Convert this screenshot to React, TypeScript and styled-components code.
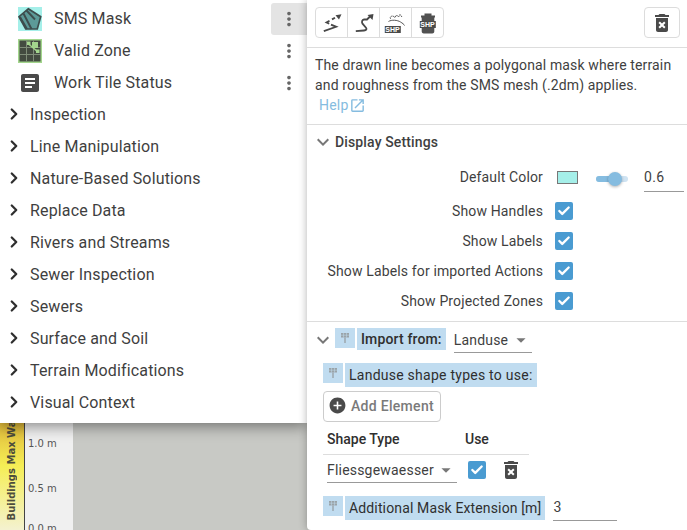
import React from "react"
import styled, { createGlobalStyle } from "styled-components"
import { Check, ChevronRight } from "lucide-react"
import {
  MdAddCircle,
  MdArrowDropDown,
  MdArticle,
  MdDeleteForever,
  MdExpandMore,
  MdMoreVert,
  MdOpenInNew,
} from "react-icons/md"

const GlobalStyle = createGlobalStyle`
  html, body {
    margin: 0;
    padding: 0;
    overflow: hidden;
    background: #c8c9c5;
  }
  body {
    font-family: Roboto, "Liberation Sans", sans-serif;
    color: #3f3f3f;
  }
`

const GROUPS = [
  "Inspection",
  "Line Manipulation",
  "Nature-Based Solutions",
  "Replace Data",
  "Rivers and Streams",
  "Sewer Inspection",
  "Sewers",
  "Surface and Soil",
  "Terrain Modifications",
  "Visual Context",
]

const TOGGLES = [
  "Show Handles",
  "Show Labels",
  "Show Labels for imported Actions",
  "Show Projected Zones",
]

const SmsMaskIcon = () => (
  <svg width="24" height="24" viewBox="0 0 24 24">
    <rect width="24" height="24" fill="#a5efe9" />
    <path d="M10.300 1.700 22.700 9.700 19.300 22H7.700L1 9.700z" fill="#5c9a98" stroke="#3d4d4d" strokeWidth="1.700" />
    <path d="M2 10 9 22M5.500 6.500 13.500 22M8.500 3.500 17 12.500" stroke="#3d4d4d" strokeWidth="1.900" fill="none" />
  </svg>
)

const ValidZoneIcon = () => (
  <svg width="24" height="24" viewBox="0 0 24 24">
    <rect width="24" height="24" fill="#a3d68d" />
    <rect x="1.500" y="1.500" width="21" height="21" fill="#434b40" />
    <path d="M8.500 1.500v21M15.500 1.500v21M1.500 8.500h21M1.500 15.500h21" stroke="#7f8d78" strokeWidth="1" />
    <path d="M10 4.500 20 13" stroke="#a3d68d" strokeWidth="1.600" />
    <rect x="14" y="3" width="6" height="6" fill="#a3d68d" />
    <rect x="9" y="2.500" width="3.500" height="3.500" fill="#a3d68d" />
    <rect x="18" y="10.500" width="3.500" height="3.500" fill="#a3d68d" />
  </svg>
)

const DashedArrowIcon = () => (
  <svg width="24" height="24" viewBox="0 0 24 24" fill="none" stroke="#484848" strokeWidth="1.800">
    <path d="M3.800 20.200 16.200 15.800 11 13.600M9.200 12.800 6.500 11.500 9.500 9.800M12 8.400 15 6.700" />
    <path d="M15.500 4.300 21.500 3.200 19 8.500z" fill="#484848" stroke="none" />
  </svg>
)

const LineArrowIcon = () => (
  <svg width="24" height="24" viewBox="0 0 24 24" fill="none" stroke="#484848" strokeWidth="1.800">
    <path d="M3.800 20.200 12 19.500c2.500-.2 3-1.500 2-2.800l-3.500-4c-1-1.500-.5-4 1.500-4.200h3l3-3" />
    <path d="M15.500 4 21.500 3 20.500 9z" fill="#484848" stroke="none" />
  </svg>
)

const ShpTag = styled.span<{ $top: number; $shift: number }>`
  position: absolute;
  left: 50%;
  top: ${(p) => p.$top}px;
  transform: translateX(calc(-50% + ${(p) => p.$shift}px));
  padding: 0 1px;
  background: #4a4a4a;
  color: #fff;
  font-family: "Liberation Sans", sans-serif;
  font-size: 7px;
  font-weight: 700;
  line-height: 7px;
  white-space: nowrap;
`

const ShapeIconBox = styled.span`
  position: relative;
  display: block;
  width: 24px;
  height: 24px;
`

const ShpImportIcon = () => (
  <ShapeIconBox>
    <svg width="24" height="24" viewBox="0 0 24 24" fill="none" stroke="#555" strokeWidth="1">
      <path d="M4.500 10.500c3-2 9-1.500 12 .5 2 1.200 3.500 2.300 4 3.500" />
      <path d="M7 8c-2-1.500 0-3 2-3l2 1.500L12.500 4l2 2 1.500-2.500 2 2.500" strokeDasharray="2 .6" />
    </svg>
    <ShpTag $top={15} $shift={-3}>SHP</ShpTag>
  </ShapeIconBox>
)

const ShpTrashIcon = () => (
  <ShapeIconBox>
    <svg width="24" height="24" viewBox="0 0 24 24" fill="#515151">
      <path d="M5 4.500h14v2H5zM8.500 2.500h7v2h-7zM5.700 6.500h12.600v14c0 1-1 2-2 2H7.700c-1 0-2-1-2-2z" />
    </svg>
    <ShpTag $top={10} $shift={0}>SHP</ShpTag>
  </ShapeIconBox>
)

const PinIcon = () => (
  <svg width="12" height="12" viewBox="0 0 12 12" fill="#9aa3a8">
    <path d="M2 1h8v4.500H2z" />
    <path d="M5.300 5.500h1.400V11H5.300z" />
    <path d="M4.500 1v4.500M7.500 1v4.500M2 3.200h8" stroke="#c0dcf0" strokeWidth=".5" />
  </svg>
)

const Checkbox = () => (
  <CheckBoxBox>
    <Check size={14} strokeWidth={4} />
  </CheckBoxBox>
)

const App: React.FC = () => {
  return (
    <Page>
      <GlobalStyle />
      <LeftColumn>
        <Menu>
          <LayerRow>
            <LayerIcon>
              <SmsMaskIcon />
            </LayerIcon>
            <LayerName>SMS Mask</LayerName>
            <MoreButton $active>
              <MdMoreVert size={22} />
            </MoreButton>
          </LayerRow>
          <LayerRow>
            <LayerIcon>
              <ValidZoneIcon />
            </LayerIcon>
            <LayerName>Valid Zone</LayerName>
            <MoreButton>
              <MdMoreVert size={22} />
            </MoreButton>
          </LayerRow>
          <LayerRow>
            <LayerIcon>
              <MdArticle size={24} color="#4a4a4a" />
            </LayerIcon>
            <LayerName>Work Tile Status</LayerName>
            <MoreButton>
              <MdMoreVert size={22} />
            </MoreButton>
          </LayerRow>
          {GROUPS.map((group) => (
            <GroupRow key={group}>
              <ChevronRight size={18} strokeWidth={3} color="#2f2f2f" />
              <GroupName>{group}</GroupName>
            </GroupRow>
          ))}
        </Menu>
        <MapArea>
          <Legend>
            <LegendStrip>
              <LegendTitle>Buildings Max Water</LegendTitle>
            </LegendStrip>
            <LegendTicks>
              <LegendTick>1.0 m</LegendTick>
              <LegendTick>0.5 m</LegendTick>
              <LegendTick>0.0 m</LegendTick>
            </LegendTicks>
          </Legend>
        </MapArea>
      </LeftColumn>

      <Panel>
        <Toolbar>
          <ButtonGroup>
            <ToolButton>
              <DashedArrowIcon />
            </ToolButton>
            <ToolButton>
              <LineArrowIcon />
            </ToolButton>
            <ToolButton>
              <ShpImportIcon />
            </ToolButton>
            <ToolButton>
              <ShpTrashIcon />
            </ToolButton>
          </ButtonGroup>
          <DeleteButton>
            <MdDeleteForever size={24} color="#4a4a4a" />
          </DeleteButton>
        </Toolbar>

        <Description>
          <DescriptionText>
            The drawn line becomes a polygonal mask where terrain and roughness from the SMS mesh
            (.2dm) applies.
          </DescriptionText>
          <HelpLink>
            Help
            <MdOpenInNew size={17} />
          </HelpLink>
        </Description>

        <Section>
          <SectionHeader>
            <MdExpandMore size={24} color="#777" />
            <SectionTitle>Display Settings</SectionTitle>
          </SectionHeader>
          <ColorRow>
            <RowLabel>Default Color</RowLabel>
            <ColorSwatch />
            <Slider>
              <SliderFill />
              <SliderThumb />
            </Slider>
            <OpacityValue>0.6</OpacityValue>
          </ColorRow>
          {TOGGLES.map((label) => (
            <ToggleRow key={label}>
              <RowLabel>{label}</RowLabel>
              <Checkbox />
            </ToggleRow>
          ))}
        </Section>

        <ImportSection>
          <ImportHeader>
            <MdExpandMore size={24} color="#777" />
            <PinBox>
              <PinIcon />
            </PinBox>
            <Highlight $bold>Import from:</Highlight>
            <SelectBox $width={78} $gap={8}>
              Landuse
              <MdArrowDropDown size={22} color="#777" />
            </SelectBox>
          </ImportHeader>
          <ImportBody>
            <PinnedRow>
              <PinBox>
                <PinIcon />
              </PinBox>
              <Highlight $wide>Landuse shape types to use:</Highlight>
            </PinnedRow>
            <AddButton>
              <MdAddCircle size={19} color="#4a4a4a" />
              Add Element
            </AddButton>
            <ShapeTable>
              <ShapeHeader>Shape Type</ShapeHeader>
              <ShapeHeader>Use</ShapeHeader>
              <ShapeHeader />
              <ShapeCell $pad={4}>
                <SelectBox $width={130} $gap={0}>
                  Fliessgewaesser
                  <MdArrowDropDown size={22} color="#777" />
                </SelectBox>
              </ShapeCell>
              <ShapeCell $pad={7}>
                <Checkbox />
              </ShapeCell>
              <ShapeCell $pad={2}>
                <MdDeleteForever size={24} color="#4a4a4a" />
              </ShapeCell>
            </ShapeTable>
            <MaskRow>
              <PinBox>
                <PinIcon />
              </PinBox>
              <Highlight>Additional Mask Extension [m]</Highlight>
              <NumberField>3</NumberField>
            </MaskRow>
          </ImportBody>
        </ImportSection>
      </Panel>
    </Page>
  )
}

const Page = styled.div`
  display: flex;
  width: 687px;
  height: 530px;
  overflow: hidden;
`

const LeftColumn = styled.div`
  display: flex;
  flex-direction: column;
  width: 307px;
  flex-shrink: 0;
`

const Menu = styled.div`
  position: relative;
  z-index: 1;
  height: 421px;
  padding-top: 2px;
  background: #fff;
  box-shadow: 0 3px 14px rgba(0, 0, 0, 0.45);
`

const LayerRow = styled.div`
  display: flex;
  align-items: center;
  height: 32px;
`

const LayerIcon = styled.span`
  display: flex;
  align-items: center;
  justify-content: center;
  width: 24px;
  height: 24px;
  margin: 2px 0 0 18px;
`

const LayerName = styled.span`
  flex: 1;
  margin-left: 12px;
  font-size: 16px;
  letter-spacing: 0.15px;
`

const MoreButton = styled.span<{ $active?: boolean }>`
  display: flex;
  align-items: center;
  justify-content: center;
  width: 36px;
  height: 32px;
  margin-top: 2px;
  border-radius: 3px 0 0 3px;
  color: #666;
  background: ${(p) => (p.$active ? "#e4e4e4" : "transparent")};
`

const GroupRow = styled.div`
  display: flex;
  align-items: center;
  height: 32px;
  padding-left: 5px;
`

const GroupName = styled.span`
  margin-left: 7px;
  font-size: 16px;
  letter-spacing: 0.15px;
`

const MapArea = styled.div`
  flex: 1;
  min-height: 0;
  overflow: hidden;
  background: #c8c9c5;
`

const Legend = styled.div`
  display: flex;
  width: 73px;
  height: 107px;
  background: #f0f0f0;
`

const LegendStrip = styled.div`
  display: flex;
  justify-content: center;
  align-items: flex-end;
  width: 24px;
  height: 100%;
  border-right: 1px solid #444;
  overflow: hidden;
  background: linear-gradient(to bottom, #e0b93a 0, #f5ee55 40%, #f4f2d0 100%);
`

const LegendTitle = styled.span`
  display: block;
  margin-bottom: 10px;
  writing-mode: vertical-rl;
  transform: rotate(180deg);
  font-family: "DejaVu Sans", sans-serif;
  font-size: 10px;
  font-weight: 700;
  line-height: 24px;
  white-space: nowrap;
  color: #4c4c3c;
`

const LegendTicks = styled.div`
  display: flex;
  flex-direction: column;
  gap: 30px;
  padding: 13px 0 0 3px;
`

const LegendTick = styled.span`
  font-family: "DejaVu Sans", sans-serif;
  font-size: 10px;
  line-height: 15px;
  color: #555;
  &:last-child {
    margin-top: -5px;
  }
`

const Panel = styled.div`
  position: relative;
  z-index: 2;
  flex: 1;
  background: #fff;
  border-bottom-left-radius: 4px;
  box-shadow: 0 0 8px rgba(0, 0, 0, 0.3);
`

const Toolbar = styled.div`
  display: flex;
  justify-content: space-between;
  height: 48px;
  padding: 7px 7px 0 8px;
  box-sizing: border-box;
  border-bottom: 1px solid #ddd;
`

const ButtonGroup = styled.div`
  display: flex;
  height: 31px;
  border: 1px solid #dcdcdc;
  border-radius: 4px;
  box-sizing: border-box;
`

const ToolButton = styled.span`
  display: flex;
  align-items: center;
  justify-content: center;
  width: 31px;
  & + & {
    border-left: 1px solid #dcdcdc;
  }
`

const DeleteButton = styled.span`
  display: flex;
  align-items: center;
  justify-content: center;
  width: 36px;
  height: 31px;
  border: 1px solid #dcdcdc;
  border-radius: 4px;
  box-sizing: border-box;
`

const Description = styled.div`
  height: 77px;
  padding: 7px 8px 0;
  box-sizing: border-box;
  border-bottom: 1px solid #ddd;
  font-size: 14px;
  line-height: 20px;
`

const DescriptionText = styled.div`
  letter-spacing: 0.14px;
`

const HelpLink = styled.span`
  display: inline-flex;
  align-items: center;
  gap: 1px;
  margin-left: 4px;
  letter-spacing: 0.2px;
  color: #85bce0;
`

const Section = styled.div`
  height: 197px;
  padding-top: 7px;
  box-sizing: border-box;
  border-bottom: 1px solid #ddd;
`

const SectionHeader = styled.div`
  display: flex;
  align-items: center;
  height: 20px;
  padding-left: 4px;
`

const SectionTitle = styled.span`
  font-size: 14px;
  font-weight: 500;
  letter-spacing: 0.14px;
`

const ColorRow = styled.div`
  display: flex;
  align-items: center;
  height: 30px;
  margin: 10px 0 4px;
`

const RowLabel = styled.span`
  width: 236px;
  text-align: right;
  font-size: 14px;
  letter-spacing: 0.14px;
  white-space: nowrap;
`

const ColorSwatch = styled.span`
  width: 19px;
  height: 11px;
  margin-left: 14px;
  background: #a5efe9;
  border: 1px solid #777;
`

const Slider = styled.span`
  position: relative;
  width: 32px;
  height: 6px;
  margin: 4px 0 0 18px;
  border-radius: 3px;
  background: #cfe3f2;
`

const SliderFill = styled.span`
  display: block;
  width: 20px;
  height: 6px;
  border-radius: 3px;
  background: #85bce0;
`

const SliderThumb = styled.span`
  position: absolute;
  left: 12px;
  top: -4px;
  width: 14px;
  height: 14px;
  border-radius: 50%;
  background: #85bce0;
  box-shadow: 0 1px 3px rgba(0, 0, 0, 0.3);
`

const OpacityValue = styled.span`
  width: 40px;
  height: 30px;
  margin-left: 16px;
  line-height: 30px;
  font-size: 14px;
  letter-spacing: 0.3px;
  border-bottom: 1px solid #999;
  box-sizing: border-box;
`

const ToggleRow = styled.div`
  display: flex;
  align-items: center;
  height: 30px;
`

const CheckBoxBox = styled.span`
  display: flex;
  align-items: center;
  justify-content: center;
  width: 18px;
  height: 18px;
  margin-left: 12px;
  border-radius: 2px;
  background: #4a9bd1;
  color: #fff;
`

const ImportSection = styled.div`
  padding-top: 6px;
`

const ImportHeader = styled.div`
  display: flex;
  align-items: flex-start;
  padding-left: 4px;
  height: 24px;
`

const PinBox = styled.span`
  display: flex;
  align-items: center;
  justify-content: center;
  flex-shrink: 0;
  width: 20px;
  height: 20px;
  background: #c0dcf0;
`

const Highlight = styled.span<{ $bold?: boolean; $wide?: boolean }>`
  margin-left: 2px;
  padding: 0 4px;
  background: #c0dcf0;
  font-size: 14px;
  line-height: ${(p) => (p.$bold ? 22 : 24)}px;
  letter-spacing: ${(p) => (p.$wide ? 0.25 : 0.14)}px;
  font-weight: ${(p) => (p.$bold ? 500 : 400)};
  color: #2f2f2f;
  white-space: nowrap;
`

const SelectBox = styled.span<{ $width: number; $gap: number }>`
  display: flex;
  align-items: center;
  justify-content: space-between;
  width: ${(p) => p.$width}px;
  height: 24px;
  margin-left: ${(p) => p.$gap}px;
  font-size: 14px;
  letter-spacing: 0.2px;
  border-bottom: 1px solid #999;
`

const ImportBody = styled.div`
  display: flex;
  flex-direction: column;
  padding: 11px 0 0 16px;
`

const PinnedRow = styled.div`
  display: flex;
  align-items: flex-start;
`

const AddButton = styled.span`
  display: flex;
  align-items: center;
  gap: 4px;
  width: 118px;
  height: 31px;
  margin-top: 4px;
  padding: 0 0 2px 4px;
  box-sizing: border-box;
  border: 1px solid #ccc;
  border-radius: 4px;
  font-size: 14px;
  font-weight: 500;
  letter-spacing: 0.3px;
  color: #7a7a7a;
`

const ShapeTable = styled.div`
  display: grid;
  grid-template-columns: 138px 36px 32px;
  width: 206px;
  margin-top: 5px;
`

const ShapeHeader = styled.span`
  height: 28px;
  padding-left: 4px;
  box-sizing: border-box;
  border-bottom: 1px solid #ddd;
  font-size: 14px;
  font-weight: 500;
  line-height: 24px;
  color: #2f2f2f;
`

const ShapeCell = styled.span<{ $pad: number }>`
  display: flex;
  align-items: center;
  height: 30px;
  padding-left: ${(p) => p.$pad}px;
  & ${CheckBoxBox} {
    margin-left: 0;
  }
`

const MaskRow = styled.div`
  display: flex;
  align-items: flex-start;
  margin-top: 11px;
`

const NumberField = styled.span`
  width: 64px;
  height: 25px;
  margin-left: 8px;
  font-size: 14px;
  line-height: 22px;
  border-bottom: 1px solid #999;
  box-sizing: border-box;
`

export default App
